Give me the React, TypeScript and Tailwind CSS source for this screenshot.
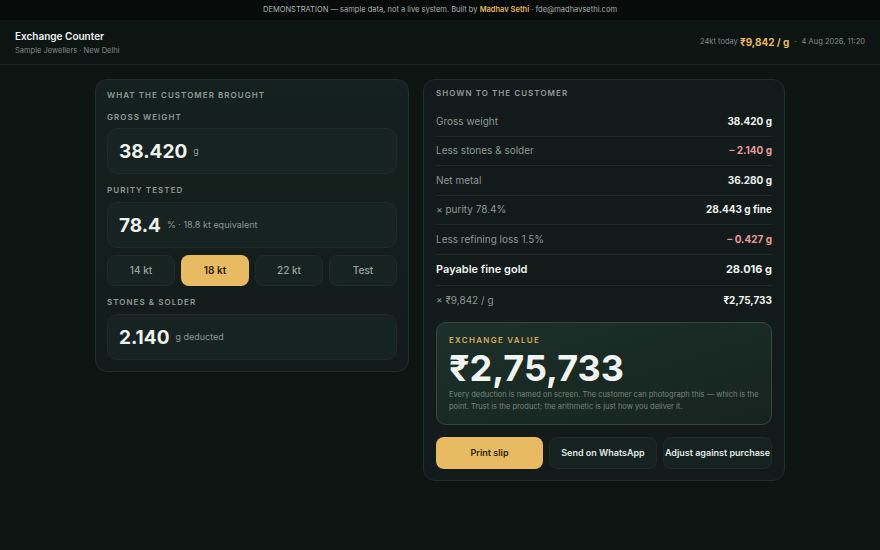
const ROWS = [
  { label: 'Gross weight', value: '38.420 g' },
  { label: 'Less stones & solder', value: '– 2.140 g', neg: true },
  { label: 'Net metal', value: '36.280 g' },
  { label: '× purity 78.4%', value: '28.443 g fine' },
  { label: 'Less refining loss 1.5%', value: '– 0.427 g', neg: true },
  { label: 'Payable fine gold', value: '28.016 g', strong: true },
  { label: '× ₹9,842 / g', value: '₹2,75,733', last: true },
];

const KT = ['14 kt', '18 kt', '22 kt', 'Test'];

function Label({ children }: { children: React.ReactNode }) {
  return <div className="text-[8px] leading-[10px] font-semibold tracking-[0.13em] text-[#8f9a95] uppercase">{children}</div>;
}

function Field({ value, unit }: { value: string; unit: string }) {
  return (
    <div className="h-[46px] rounded-[10px] bg-[#172320] border border-[#1f2b28] flex items-center px-[11px] gap-1.5">
      <span className="text-[19px] font-bold text-[#eef3f0] leading-none">{value}</span>
      <span className="text-[9px] text-[#8a9590]">{unit}</span>
    </div>
  );
}

export default function App() {
  return (
    <div className="min-h-[550px] bg-[#0c1512] text-white" style={{ fontFamily: 'Inter, "Noto Sans", sans-serif' }}>
      <div className="h-5 bg-[#070b0a] flex items-center justify-center text-[7.5px] text-[#a9b2ae]">
        DEMONSTRATION — sample data, not a live system. Built by&nbsp;<span className="font-semibold text-[#e3b55e]">Madhav Sethi</span>&nbsp;· fde@madhavsethi.com
      </div>
      <div className="h-[45px] bg-[#0d1513] border-b border-[#1e2926] flex items-center justify-between px-[15px]">
        <div className="pt-[2px]">
          <div className="text-[10px] font-semibold text-[#eef2f0] leading-tight">Exchange Counter</div>
          <div className="text-[7.5px] text-[#7f8a86] mt-[2px]">Sample Jewellers · New Delhi</div>
        </div>
        <div className="flex items-center text-[7.5px] text-[#7f8a86]">
          24kt today&nbsp;<span className="text-[10px] font-bold text-[#e6b85e]">₹9,842 / g</span>
          <span className="mx-[5px]">·</span>4 Aug 2026, 11:20
        </div>
      </div>

      <div className="w-[690px] mx-auto pt-[14px] flex gap-[14px] items-start">
        <div className="w-[314px] rounded-[12px] border border-[#22302c] bg-gradient-to-b from-[#15211e] to-[#121b19] px-[11px] pt-[10px] pb-[11px]">
          <Label>What the customer brought</Label>
          <div className="mt-[12px]"><Label>Gross weight</Label></div>
          <div className="mt-[6px]"><Field value="38.420" unit="g" /></div>
          <div className="mt-[11px]"><Label>Purity tested</Label></div>
          <div className="mt-[7px]"><Field value="78.4" unit="% · 18.8 kt equivalent" /></div>
          <div className="mt-[7px] grid grid-cols-4 gap-[6px]">
            {KT.map(k => (
              <div key={k}
                className={k === '18 kt'
                  ? 'h-[31px] rounded-[8px] bg-[#e8bb63] flex items-center justify-center text-[10px] font-semibold text-[#2a1f0c]'
                  : 'h-[31px] rounded-[8px] bg-[#172320] border border-[#1f2b28] flex items-center justify-center text-[10px] font-medium text-[#9aa49f]'}>
                {k}
              </div>
            ))}
          </div>
          <div className="mt-[11px]"><Label>Stones & solder</Label></div>
          <div className="mt-[7px]"><Field value="2.140" unit="g deducted" /></div>
        </div>

        <div className="w-[362px] rounded-[12px] border border-[#22302c] bg-[#121b19] px-[12px] pt-[8px] pb-[11px]">
          <Label>Shown to the customer</Label>
          <div className="mt-[9px]">
            {ROWS.map(r => (
              <div key={r.label}
                className={`flex items-center justify-between ${r.strong ? 'h-[31px]' : 'h-[29.5px]'} ${r.last ? '' : 'border-b border-[#1f2a27]'}`}>
                <span className={r.strong ? 'text-[11px] font-semibold text-[#eef2f0]' : 'text-[10px] text-[#8c9793]'}>{r.label}</span>
                <span className={`font-bold ${r.strong ? 'text-[11px]' : 'text-[10px]'} ${r.neg ? 'text-[#e59a9a]' : 'text-[#eef2f0]'}`}>{r.value}</span>
              </div>
            ))}
          </div>
          <div className="mt-[7px] rounded-[10px] border border-[#39473a] bg-gradient-to-br from-[#1c3029] to-[#16241f] px-[12px] pt-[12px] pb-[11px]">
            <div className="text-[8px] leading-[10px] font-semibold tracking-[0.16em] text-[#d9ad5a]">EXCHANGE VALUE</div>
            <div className="text-[36px] font-bold leading-none text-[#f0f5f2] mt-[5px]">₹2,75,733</div>
            <div className="text-[7.5px] leading-[12px] text-[#78847f] mt-[3px]">
              Every deduction is named on screen. The customer can photograph this — which is the point. Trust is the product; the arithmetic is just how you deliver it.
            </div>
          </div>
          <div className="mt-[12px] flex gap-[6px]">
            <div className="w-[107px] h-[32px] rounded-[8px] bg-[#e8bb63] flex items-center justify-center text-[9px] font-semibold text-[#2a1f0c]">Print slip</div>
            <div className="w-[108px] h-[32px] rounded-[8px] bg-[#152220] border border-[#1f2b28] flex items-center justify-center text-[9px] font-semibold text-[#e3e8e6]">Send on WhatsApp</div>
            <div className="w-[109px] h-[32px] rounded-[8px] bg-[#152220] border border-[#1f2b28] flex items-center justify-center text-[9px] font-semibold text-[#e3e8e6] whitespace-nowrap">Adjust against purchase</div>
          </div>
        </div>
      </div>
    </div>
  );
}
